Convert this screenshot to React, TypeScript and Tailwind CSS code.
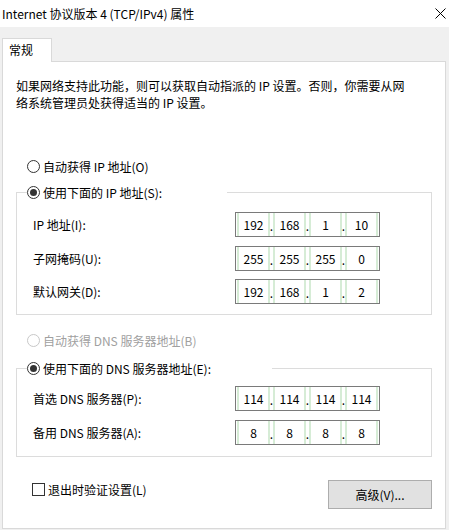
import { Fragment } from "react";

function Radio({ checked, disabled }: { checked?: boolean; disabled?: boolean }) {
  return (
    <span
      className={`flex h-[13px] w-[13px] shrink-0 items-center justify-center rounded-full border bg-white ${
        disabled ? "border-[#c8c8c8]" : "border-[#333333]"
      }`}
    >
      {checked && <span className="h-[7px] w-[7px] rounded-full bg-[#333333]" />}
    </span>
  );
}

function IpBox({ parts }: { parts: string[] }) {
  return (
    <div className="flex h-[25px] w-[145px] items-stretch border border-[#7a7a7a] bg-white px-[1px]">
      {parts.map((p, i) => (
        <Fragment key={i}>
          {i > 0 && <span className="flex w-[3px] items-end justify-center pb-[4px] leading-none">.</span>}
          <span className="flex flex-1 items-center justify-center border-x-2 border-[#d6ecd6]">{p}</span>
        </Fragment>
      ))}
    </div>
  );
}

function Field({ label, parts }: { label: string; parts: string[] }) {
  return (
    <div className="flex items-center">
      <span className="w-[202px]">{label}</span>
      <IpBox parts={parts} />
    </div>
  );
}

export default function App() {
  return (
    <div className="flex h-[530px] w-[449px] flex-col overflow-hidden bg-[#f0f0f0] text-[12px] leading-[17px] text-black [font-family:'Noto_Sans_CJK_SC',sans-serif]">
      {/* title bar */}
      <div className="flex h-[27px] shrink-0 items-center justify-between bg-white pl-[2px] pr-[3px]">
        <span>Internet 协议版本 4 (TCP/IPv4) 属性</span>
        <svg width="11" height="11" viewBox="0 0 11 11">
          <path d="M0.5 0.5L10.5 10.5M10.5 0.5L0.5 10.5" stroke="#000" strokeWidth="1" fill="none" />
        </svg>
      </div>

      {/* tabs */}
      <div className="mt-[11px] flex pl-[2px]">
        <div className="relative z-10 -mb-px flex h-[24px] w-[50px] items-center border-x border-t border-[#d9d9d9] bg-white pb-[2px] pl-[6px]">
          常规
        </div>
      </div>

      {/* panel */}
      <div className="ml-[2px] mr-[3px] h-[468px] border border-[#d9d9d9] bg-white px-[13px]">
        <p className="mt-[15px] whitespace-nowrap">
          如果网络支持此功能，则可以获取自动指派的 IP 设置。否则，你需要从网
          <br />
          络系统管理员处获得适当的 IP 设置。
        </p>

        <div className="mt-[47px] ml-[11px] flex items-center gap-[3px]">
          <Radio />
          <span>自动获得 IP 地址(O)</span>
        </div>

        <fieldset className="mt-[9px] border border-[#dcdcdc] pb-[10px]">
          <legend className="ml-[10px] w-[200px]">
            <span className="flex items-center gap-[3px]">
              <Radio checked />
              <span>使用下面的 IP 地址(S):</span>
            </span>
          </legend>
          <div className="mt-[11px] flex flex-col gap-[8.5px] pl-[16px]">
            <Field label="IP 地址(I):" parts={["192", "168", "1", "10"]} />
            <Field label="子网掩码(U):" parts={["255", "255", "255", "0"]} />
            <Field label="默认网关(D):" parts={["192", "168", "1", "2"]} />
          </div>
        </fieldset>

        <div className="mt-[17px] ml-[11px] flex items-center gap-[3px] text-[#a0a0a0]">
          <Radio disabled />
          <span>自动获得 DNS 服务器地址(B)</span>
        </div>

        <fieldset className="mt-[11px] border border-[#dcdcdc] pb-[11px]">
          <legend className="ml-[10px] w-[245px]">
            <span className="flex items-center gap-[3px]">
              <Radio checked />
              <span>使用下面的 DNS 服务器地址(E):</span>
            </span>
          </legend>
          <div className="mt-[9px] flex flex-col gap-[9px] pl-[16px]">
            <Field label="首选 DNS 服务器(P):" parts={["114", "114", "114", "114"]} />
            <Field label="备用 DNS 服务器(A):" parts={["8", "8", "8", "8"]} />
          </div>
        </fieldset>

        <div className="mt-[23px] flex items-start justify-between">
          <label className="ml-[16px] mt-[1px] flex items-center gap-[3px]">
            <span className="h-[13px] w-[13px] border border-[#333333] bg-white" />
            <span>退出时验证设置(L)</span>
          </label>
          <button className="h-[29px] w-[104px] border border-[#adadad] bg-[#e1e1e1]">高级(V)...</button>
        </div>
      </div>
    </div>
  );
}
